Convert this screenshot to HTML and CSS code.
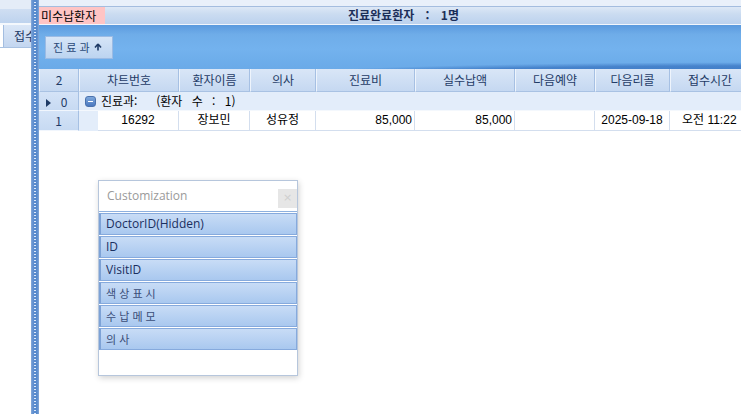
FILE: index.html
```html
<!DOCTYPE html>
<html lang="ko">
<head>
<meta charset="utf-8">
<title>진료완료환자</title>
<link rel="stylesheet" href="styles.css">
</head>
<body>
<div class="app">
  <div class="left-pane">
    <div class="lp-top"></div>
    <div class="lp-band"></div>
    <div class="lp-header"><div class="lp-cell">접수</div></div>
  </div>
  <div class="splitter"></div>
  <div class="right-pane">
    <div class="rp-top"></div>
    <div class="title-bar">
      <span class="unpaid">미수납환자</span>
      <span class="title">진료완료환자 : 1명</span>
    </div>
    <div class="group-panel">
      <div class="group-chip">진 료 과
        <svg class="chip-arrow" width="8" height="8" viewBox="0 0 8 8"><path d="M4 1 L1 4.5 M4 1 L7 4.5 M4 1 L4 7.5" stroke="#1f3b66" stroke-width="1.6" fill="none"/></svg>
      </div>
    </div>
    <div class="grid">
      <div class="row header-row">
        <div class="cell ind">2</div>
        <div class="cell c1">차트번호</div>
        <div class="cell c2">환자이름</div>
        <div class="cell c3">의사</div>
        <div class="cell c4">진료비</div>
        <div class="cell c5">실수납액</div>
        <div class="cell c6">다음예약</div>
        <div class="cell c7">다음리콜</div>
        <div class="cell c8">접수시간</div>
      </div>
      <div class="row group-row">
        <div class="cell ind"><span class="tri"></span>0</div>
        <div class="group-content">
          <span class="minus"></span>
          <span class="group-text">진료과:  (환자 수 : 1)</span>
        </div>
      </div>
      <div class="row data-row">
        <div class="cell ind">1</div>
        <div class="indent"></div>
        <div class="dcell d1 center">16292</div>
        <div class="dcell c2 center">장보민</div>
        <div class="dcell c3 center">성유정</div>
        <div class="dcell c4 right">85,000</div>
        <div class="dcell c5 right">85,000</div>
        <div class="dcell c6"></div>
        <div class="dcell c7 center">2025-09-18</div>
        <div class="dcell c8 left">오전 11:22</div>
      </div>
    </div>
  </div>
</div>

<div class="customization">
  <div class="cz-head">
    <span class="cz-title">Customization</span>
    <span class="cz-close">×</span>
  </div>
  <div class="cz-list">
    <div class="cz-item">DoctorID(Hidden)</div>
    <div class="cz-item">ID</div>
    <div class="cz-item">VisitID</div>
    <div class="cz-item ko">색 상 표 시</div>
    <div class="cz-item ko">수 납 메 모</div>
    <div class="cz-item ko">의 사</div>
  </div>
</div>
</body>
</html>
```
FILE: styles.css
```css
* { box-sizing: border-box; }
html, body {
  margin: 0;
  padding: 0;
  width: 741px;
  height: 414px;
  overflow: hidden;
  background: #ffffff;
  font-family: "Liberation Sans", "Noto Sans CJK KR", sans-serif;
  font-size: 12px;
  color: #000;
}
.app {
  display: flex;
  height: 414px;
}

/* left pane */
.left-pane {
  width: 31px;
  flex: none;
  overflow: hidden;
  display: flex;
  flex-direction: column;
}
.lp-top { height: 9px; background: #e4ecf7; }
.lp-band {
  height: 16px;
  background: linear-gradient(#cfdef2, #bed3ee);
  border-bottom: 2px solid #f4f8fd;
}
.lp-header {
  height: 23px;
  padding-left: 3px;
  border-bottom: 1px solid #a9c2e2;
}
.lp-cell {
  height: 100%;
  width: 28px;
  border-left: 1px solid #a3bde0;
  background: linear-gradient(#dbe7f7, #c3d6f0);
  padding-left: 10px;
  line-height: 22px;
  color: #1f3b66;
  white-space: nowrap;
  overflow: hidden;
  font-family: "Noto Sans CJK KR", sans-serif;
}

/* splitter */
.splitter {
  width: 8px;
  flex: none;
  background:
    repeating-linear-gradient(180deg, transparent 0 2px, #dfeafa 2px 3px) 3px 0 / 2px 100% no-repeat,
    linear-gradient(90deg, #86a9d8 0, #5f8fd0 2px, #5589cc 6px, #86a9d8 8px);
}

/* right pane */
.right-pane {
  flex: 1;
  min-width: 0;
  overflow: hidden;
  display: flex;
  flex-direction: column;
}
.rp-top {
  height: 7px;
  background: #e9f0fa;
  border-bottom: 1px solid #a4bddf;
}
.title-bar {
  height: 18px;
  display: flex;
  align-items: stretch;
  background: linear-gradient(#dde8f6 0%, #cbdcf1 40%, #bcd2ee 100%);
  border-bottom: 1px solid #f2f6fc;
}
.unpaid {
  width: 66px;
  background: #ffc4c4;
  line-height: 17px;
  padding-left: 2px;
  font-family: "Noto Sans CJK KR", sans-serif;
  font-size: 12px;
  color: #000;
  white-space: nowrap;
}
.title {
  margin-left: 243px;
  font-family: "Noto Sans CJK KR", sans-serif;
  font-weight: bold;
  font-size: 12px;
  line-height: 16px;
  color: #1c2f59;
  white-space: pre;
  word-spacing: 8px;
}

.group-panel {
  height: 44px;
  padding: 11px 0 0 6px;
  background:
    radial-gradient(ellipse 110% 70% at 100% 135%, rgba(40,98,180,0.8) 0%, rgba(40,98,180,0.55) 60%, rgba(40,98,180,0) 72%),
    linear-gradient(180deg, #5b9ade 0%, #6fade9 22%, #73b2ee 55%, #6aaae8 100%);
}
.group-chip {
  width: 68px;
  height: 23px;
  border: 1px solid #9bbbe4;
  background: linear-gradient(#d6e5f7, #bcd4f0);
  color: #2b4a78;
  font-family: "Noto Sans CJK KR", sans-serif;
  font-size: 11px;
  line-height: 21px;
  padding-left: 7px;
  display: flex;
  align-items: center;
  gap: 4px;
}
.chip-arrow { margin-top: -1px; }

/* grid */
.grid { display: flex; flex-direction: column; }
.row { display: flex; flex: none; }
.cell {
  flex: none;
  font-family: "Noto Sans CJK KR", sans-serif;
  color: #1f3b66;
  text-align: center;
  white-space: nowrap;
  overflow: hidden;
}
.header-row { height: 23px; }
.header-row .cell {
  line-height: 22px;
  background: linear-gradient(#d9e6f7, #c5d8f1);
  border-right: 1px solid #a6c0e3;
  border-left: 1px solid #eef4fc;
  border-bottom: 1px solid #a9c2e3;
}
.ind { width: 40px; }
.c1 { width: 100px; }
.d1 { width: 81px; }
.c2 { width: 71px; }
.c3 { width: 66px; }
.c4 { width: 99px; }
.c5 { width: 100px; }
.c6 { width: 80px; }
.c7 { width: 75px; }
.c8 { width: 80px; }

.group-row {
  height: 19px;
  background: #e3edfa;
}
.group-row .cell.ind,
.data-row .cell.ind {
  background: linear-gradient(#d4e3f7, #c7daf2);
  border-bottom: 1px solid #f1f6fd;
  border-right: 1px solid #a6c0e3;
  line-height: 19px;
}
.tri {
  display: inline-block;
  width: 0;
  height: 0;
  border-left: 5px solid #1f3b66;
  border-top: 4px solid transparent;
  border-bottom: 4px solid transparent;
  margin-right: 10px;
  margin-left: -4px;
  vertical-align: 0px;
}
.group-content {
  display: flex;
  align-items: center;
  padding-left: 6px;
  gap: 5px;
  border-bottom: 1px solid #f4f8fd;
  flex: 1;
}
.minus {
  width: 11px;
  height: 11px;
  border-radius: 3px;
  background: linear-gradient(#7ea8dc, #4a78bf);
  border: 1px solid #4a72ae;
  position: relative;
}
.minus::after {
  content: "";
  position: absolute;
  left: 2px;
  right: 2px;
  top: 4px;
  height: 1px;
  background: #ffffff;
}
.group-text {
  font-family: "Noto Sans CJK KR", sans-serif;
  line-height: 18px;
  white-space: pre;
  word-spacing: 6px;
}

.data-row { height: 20px; }
.data-row .cell.ind { line-height: 20px; }
.indent {
  width: 19px;
  flex: none;
  background: #e3edfa;
}
.dcell {
  flex: none;
  background: #ffffff;
  border-right: 1px solid #d3deee;
  border-bottom: 1px solid #d3deee;
  line-height: 19px;
  white-space: nowrap;
  overflow: hidden;
  font-family: "Liberation Sans", "Noto Sans CJK KR", sans-serif;
}
.center { text-align: center; }
.right { text-align: right; padding-right: 2px; }
.left { text-align: left; padding-left: 12px; }

/* customization popup */
.customization {
  position: absolute;
  left: 98px;
  top: 180px;
  width: 200px;
  height: 196px;
  background: #ffffff;
  border: 1px solid #b6c6dc;
  box-shadow: 1px 2px 6px rgba(0,0,0,0.18);
  display: flex;
  flex-direction: column;
}
.cz-head {
  height: 30px;
  display: flex;
  align-items: flex-start;
  justify-content: space-between;
  padding: 7px 0 0 8px;
}
.cz-title {
  font-family: "Open Sans", "Noto Sans", sans-serif;
  font-size: 12px;
  color: #9a9a9a;
  line-height: 16px;
}
.cz-close {
  width: 19px;
  height: 19px;
  margin-top: 1px;
  background: #e6e6e6;
  color: #cfcfcf;
  font-size: 11px;
  line-height: 18px;
  text-align: center;
  font-family: "DejaVu Sans", sans-serif;
}
.cz-list {
  border-top: 1px solid #8eb0de;
  display: flex;
  flex-direction: column;
  gap: 1px;
  padding-top: 1px;
}
.cz-item {
  height: 22px;
  background: linear-gradient(#c8dcf6, #a9c8ef);
  border: 1px solid #86aadd;
  border-left: 2px solid #7da2d6;
  color: #1b2f60;
  font-family: "Open Sans", "Noto Sans", sans-serif;
  font-size: 12px;
  line-height: 20px;
  padding-left: 5px;
  white-space: nowrap;
}
.cz-item.ko {
  font-family: "Noto Sans CJK KR", sans-serif;
  font-size: 11px;
  color: #3a4d78;
}
```
